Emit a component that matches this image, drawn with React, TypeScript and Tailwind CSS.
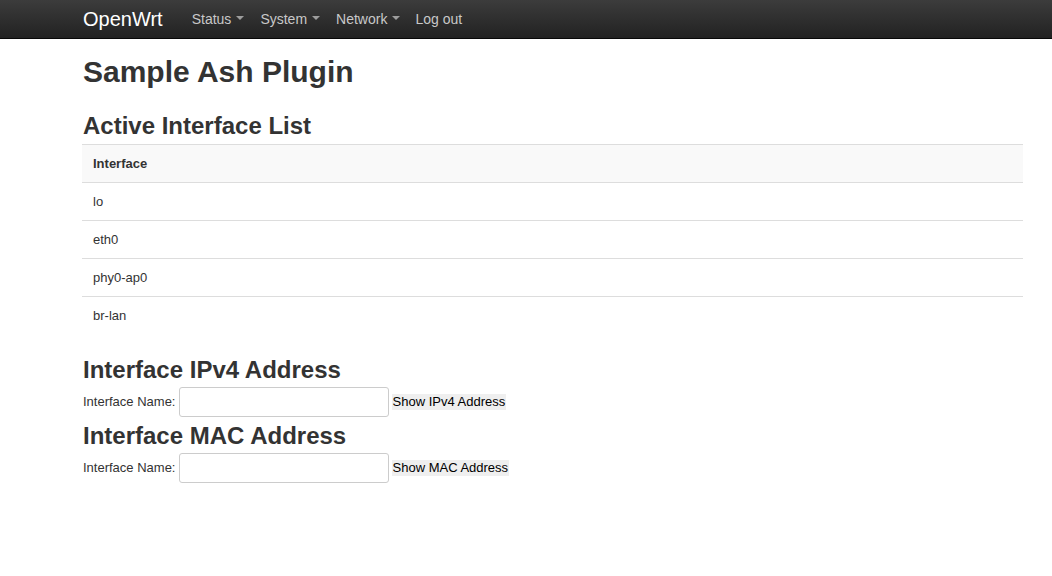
import React from "react";

const Caret = () => (
  <span className="ml-[5px] inline-block w-0 h-0 border-l-[4px] border-r-[4px] border-t-[4px] border-l-transparent border-r-transparent border-t-[#9d9d9d] align-middle mb-[2px]" />
);

export default function App() {
  const rows = ["lo", "eth0", "phy0-ap0", "br-lan"];
  return (
    <div className="min-h-[576px] bg-white text-[#333] text-[13px]" style={{ fontFamily: '"Liberation Sans", Arial, sans-serif' }}>
      <div className="h-[39px] bg-gradient-to-b from-[#3c3c3c] to-[#222222] border-b border-[#080808]">
        <div className="ml-[83px] flex items-center h-full">
          <span className="text-white text-[20px] mr-[29px]">OpenWrt</span>
          <div className="flex items-center gap-[16px] text-[14px] text-[#c8c8c8]">
            <span className="flex items-center">Status<Caret /></span>
            <span className="flex items-center">System<Caret /></span>
            <span className="flex items-center">Network<Caret /></span>
            <span className="-ml-[1px]">Log out</span>
          </div>
        </div>
      </div>
      <div className="ml-[82px] w-[941px]">
        <h2 className="pl-[1px] text-[30px] font-bold leading-[33px] mt-[16px] mb-[0px]">Sample Ash Plugin</h2>
        <h3 className="pl-[1px] text-[24px] font-bold leading-[26px] mt-[25px] mb-[5px]">Active Interface List</h3>
        <table className="w-full border-collapse">
          <thead>
            <tr className="bg-[#f9f9f9]">
              <th className="text-left font-bold h-[38px] px-[11px] border-t border-b border-[#dddddd]">Interface</th>
            </tr>
          </thead>
          <tbody>
            {rows.map((r, i) => (
              <tr key={r}>
                <td className={`h-[38px] px-[11px] ${i < rows.length - 1 ? "border-b border-[#dddddd]" : ""}`}>{r}</td>
              </tr>
            ))}
          </tbody>
        </table>
        <h3 className="pl-[1px] text-[24px] font-bold leading-[26px] mt-[22px] mb-[4px]">Interface IPv4 Address</h3>
        <div className="flex items-center h-[30px] pl-[1px]">
          <span>Interface Name:</span>
          <input className="ml-[3px] w-[210px] h-[30px] border border-[#cccccc] rounded-[3px] outline-none" />
          <button className="ml-[3px] bg-[#efefef] text-black px-[1px] leading-[16px] text-[13px]">Show IPv4 Address</button>
        </div>
        <h3 className="pl-[1px] text-[24px] font-bold leading-[26px] mt-[6px] mb-[4px]">Interface MAC Address</h3>
        <div className="flex items-center h-[30px] pl-[1px]">
          <span>Interface Name:</span>
          <input className="ml-[3px] w-[210px] h-[30px] border border-[#cccccc] rounded-[3px] outline-none" />
          <button className="ml-[3px] bg-[#efefef] text-black px-[1px] leading-[16px] text-[13px]">Show MAC Address</button>
        </div>
      </div>
    </div>
  );
}
